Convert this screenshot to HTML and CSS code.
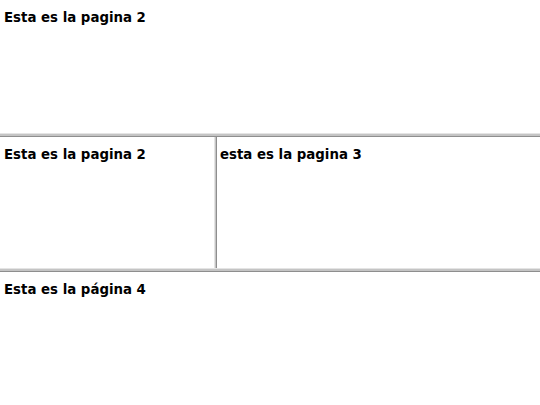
FILE: index.html
```html
<!DOCTYPE html>
<html>
<head>
<meta charset="utf-8">
<link rel="stylesheet" href="styles.css">
</head>
<body>
<div class="frames">
  <div class="frame top"><p class="t">Esta es la pagina 2</p></div>
  <div class="hsep"></div>
  <div class="middle">
    <div class="frame left"><p class="t">Esta es la pagina 2</p></div>
    <div class="vsep"></div>
    <div class="frame right"><p class="t">esta es la pagina 3</p></div>
  </div>
  <div class="hsep"></div>
  <div class="frame bottom"><p class="t">Esta es la página 4</p></div>
</div>
</body>
</html>
```
FILE: styles.css
```css
html, body { margin: 0; padding: 0; background: #fff; }
.frames { width: 540px; height: 405px; display: grid; grid-template-rows: 133px 4px 131px 4px 1fr; }
.frame { padding: 9px 4px 0 4px; overflow: hidden; }
.middle { display: grid; grid-template-columns: 214px 3px 1fr; }
.middle .right { padding-left: 3px; }
.t { margin: 0; font-family: "DejaVu Sans", Verdana, sans-serif; font-weight: bold; font-size: 13.33px; color: #000; line-height: 18px; }
.hsep { background: #c4c4c4; border-top: 1px solid #e4e4e4; border-bottom: 1px solid #8e8e8e; }
.vsep { background: #c4c4c4; border-left: 1px solid #e4e4e4; border-right: 1px solid #8e8e8e; }
```
